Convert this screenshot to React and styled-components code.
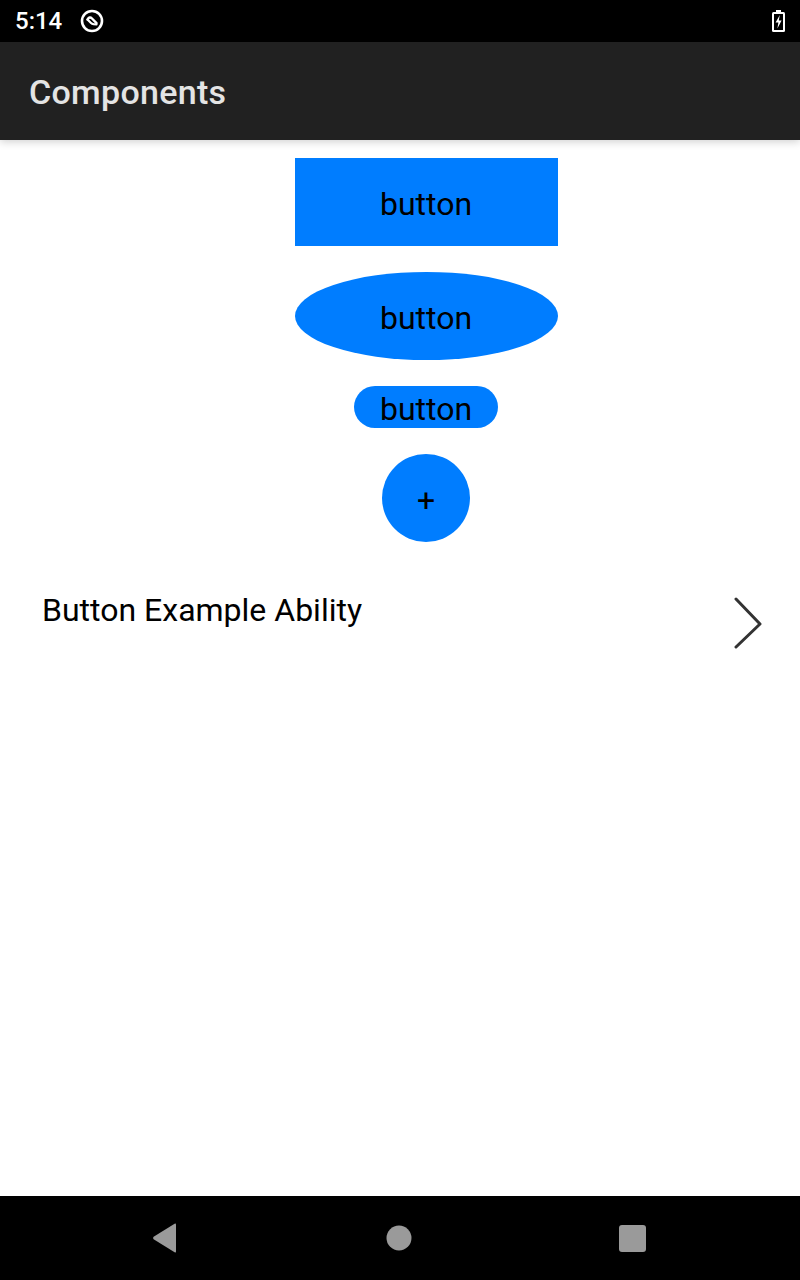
import * as React from 'react'
import styled, { createGlobalStyle, css } from 'styled-components';

const GlobalStyle = createGlobalStyle`
  html, body {
    margin: 0;
    padding: 0;
    background: #ffffff;
  }

  body {
    font-family: Roboto, "Noto Sans", "Liberation Sans", sans-serif;
  }
`

const StyledScreen = styled.div`
  width: 800px;
  height: 1280px;
  display: flex;
  flex-direction: column;
  background-color: #ffffff;
  overflow: hidden;
`

const StyledStatusBar = styled.div`
  height: 42px;
  flex: none;
  background-color: #000000;
  color: #ffffff;
  display: flex;
  align-items: center;
  padding-left: 15px;
  padding-right: 15px;
  gap: 18px;
`

const StyledClock = styled.span`
  font-size: 24px;
  font-weight: 500;
  line-height: 1;
`

const StyledStatusRight = styled.div`
  margin-left: auto;
  display: flex;
  align-items: center;
`

const StyledHeader = styled.header`
  height: 98px;
  flex: none;
  background-color: #212121;
  display: flex;
  align-items: center;
  padding-left: 29px;
  padding-top: 2px;
  box-sizing: border-box;
  box-shadow: 0 2px 8px rgba(0, 0, 0, 0.18);
  position: relative;
  z-index: 1;
`

const StyledTitle = styled.h1`
  margin: 0;
  font-size: 34px;
  font-weight: 500;
  color: #e4e4e4;
  letter-spacing: 0.3px;
`

const StyledContent = styled.main`
  flex: 1;
  display: flex;
  flex-direction: column;
  padding-top: 18px;
`

// the button column sits a little right of the page centre, as in the app
const StyledButtonStack = styled.div`
  display: flex;
  flex-direction: column;
  align-items: center;
  gap: 26px;
  padding-left: 52px;
`

const shapes = {
  rect: css`
    width: 263px;
    height: 88px;
    border-radius: 0;
  `,
  ellipse: css`
    width: 263px;
    height: 88px;
    border-radius: 50%;
  `,
  pill: css`
    width: 144px;
    height: 42px;
    border-radius: 21px;
  `,
  circle: css`
    width: 88px;
    height: 88px;
    border-radius: 50%;
  `,
}

const StyledButton = styled.button`
  ${props => shapes[props.$shape]}
  border: none;
  padding: 4px 0 0 0;
  box-sizing: border-box;
  background-color: #007dff;
  color: #000000;
  font-family: Roboto, "Noto Sans", sans-serif;
  font-size: 32px;
  line-height: 1;
  display: flex;
  align-items: center;
  justify-content: center;
  cursor: pointer;
`

const StyledListRow = styled.div`
  display: flex;
  justify-content: space-between;
  align-items: flex-start;
  padding: 0 38px 0 42px;
  margin-top: 49px;
`

const StyledListText = styled.span`
  font-size: 32px;
  color: #000000;
  line-height: 38px;
`

const StyledChevron = styled.svg`
  margin-top: 6px;
  flex: none;
`

const StyledNavBar = styled.nav`
  height: 84px;
  flex: none;
  background-color: #000000;
  display: flex;
  align-items: center;
  justify-content: space-between;
  padding: 0 154px 0 152px;
`

const NavIcon = ({ kind }) => {
  if (kind === 'back') {
    return (
      <svg width="26" height="30" viewBox="0 0 26 30">
        <path d="M24 1.5 L24 28.5 Q24 30 22.6 29.2 L1.6 16.2 Q0.4 15 1.6 13.8 L22.6 0.8 Q24 0 24 1.5 Z" fill="#9a9a9a" />
      </svg>
    )
  }
  if (kind === 'home') {
    return (
      <svg width="26" height="26" viewBox="0 0 26 26">
        <circle cx="13" cy="13" r="12.5" fill="#9a9a9a" />
      </svg>
    )
  }
  return (
    <svg width="27" height="27" viewBox="0 0 27 27">
      <rect x="0" y="0" width="27" height="27" rx="3" fill="#9a9a9a" />
    </svg>
  )
}

const App = () => {
  return (
    <StyledScreen>
      <GlobalStyle />
      <StyledStatusBar>
        <StyledClock>5:14</StyledClock>
        <svg width="24" height="24" viewBox="0 0 24 24">
          <circle cx="12" cy="12" r="10" fill="none" stroke="#ffffff" strokeWidth="2.6" />
          <path d="M7.5 10.5 Q9.5 7 12 9.5 L16.5 14.2" fill="none" stroke="#ffffff" strokeWidth="2.4" strokeLinecap="round" />
          <path d="M7.5 10.5 L11 14 Q12 15 13.5 15.2 L16.5 15.4" fill="none" stroke="#ffffff" strokeWidth="2.2" strokeLinecap="round" />
        </svg>
        <StyledStatusRight>
          <svg width="13" height="22" viewBox="0 0 13 22">
            <rect x="4" y="0" width="5" height="3" fill="#ffffff" />
            <rect x="0" y="2" width="13" height="20" rx="1.5" fill="#ffffff" />
            <rect x="2" y="4" width="9" height="16" fill="#000000" />
            <path d="M7.8 5 L3.6 12.6 L6.4 12.6 L5.4 18.5 L9.6 10.6 L6.8 10.6 Z" fill="#ffffff" />
          </svg>
        </StyledStatusRight>
      </StyledStatusBar>

      <StyledHeader>
        <StyledTitle>Components</StyledTitle>
      </StyledHeader>

      <StyledContent>
        <StyledButtonStack>
          <StyledButton $shape="rect">button</StyledButton>
          <StyledButton $shape="ellipse">button</StyledButton>
          <StyledButton $shape="pill">button</StyledButton>
          <StyledButton $shape="circle">+</StyledButton>
        </StyledButtonStack>

        <StyledListRow>
          <StyledListText>Button Example Ability</StyledListText>
          <StyledChevron width="28" height="52" viewBox="0 0 28 52">
            <path d="M2 2 L26 27 L2 50" fill="none" stroke="#333333" strokeWidth="3" strokeLinecap="round" strokeLinejoin="round" />
          </StyledChevron>
        </StyledListRow>
      </StyledContent>

      <StyledNavBar>
        <NavIcon kind="back" />
        <NavIcon kind="home" />
        <NavIcon kind="recents" />
      </StyledNavBar>
    </StyledScreen>
  )
}

export default App
